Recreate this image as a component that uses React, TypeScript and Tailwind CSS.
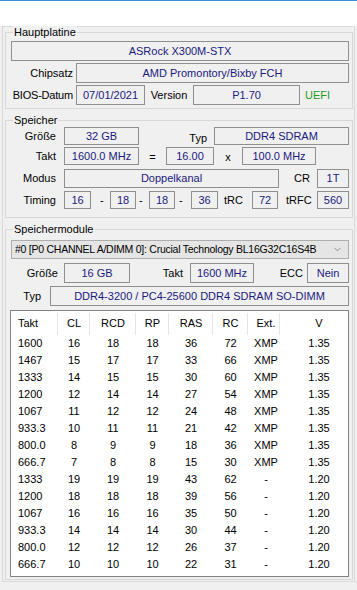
import React from "react";
import { ChevronDown } from "lucide-react";

const V = "text-[#1a1a80]";

function Field({ w, children, className = "" }: { w?: string; children: React.ReactNode; className?: string }) {
  return (
    <div className={`h-full border border-[#8f8f8f] flex items-center justify-center whitespace-nowrap ${V} ${w ?? "flex-1"} ${className}`}>
      {children}
    </div>
  );
}

function Group({ title, children, className = "" }: { title: string; children: React.ReactNode; className?: string }) {
  return (
    <div className={`relative border border-[#d8d8d8] pl-[5px] pr-[3px] ${className}`}>
      <div className="absolute left-[7px] top-[-7px] px-[1px] bg-[#f0f0f0] leading-[13px] text-black">{title}</div>
      {children}
    </div>
  );
}

const rows: string[][] = [
  ["1600", "16", "18", "18", "36", "72", "XMP", "1.35"],
  ["1467", "15", "17", "17", "33", "66", "XMP", "1.35"],
  ["1333", "14", "15", "15", "30", "60", "XMP", "1.35"],
  ["1200", "12", "14", "14", "27", "54", "XMP", "1.35"],
  ["1067", "11", "12", "12", "24", "48", "XMP", "1.35"],
  ["933.3", "10", "11", "11", "21", "42", "XMP", "1.35"],
  ["800.0", "8", "9", "9", "18", "36", "XMP", "1.35"],
  ["666.7", "7", "8", "8", "15", "30", "XMP", "1.35"],
  ["1333", "19", "19", "19", "43", "62", "-", "1.20"],
  ["1200", "18", "18", "18", "39", "56", "-", "1.20"],
  ["1067", "16", "16", "16", "35", "50", "-", "1.20"],
  ["933.3", "14", "14", "14", "30", "44", "-", "1.20"],
  ["800.0", "12", "12", "12", "26", "37", "-", "1.20"],
  ["666.7", "10", "10", "10", "22", "31", "-", "1.20"],
];

const headers = ["Takt", "CL", "RCD", "RP", "RAS", "RC", "Ext.", "V"];
const colW = ["w-[47px]", "w-[32px]", "w-[46px]", "w-[33px]", "w-[44px]", "w-[35px]", "w-[32px]", "w-[78px]"];
const colAlign = [
  "justify-start pl-[7px]",
  "justify-center",
  "justify-center",
  "justify-center",
  "justify-center",
  "justify-center",
  "justify-center pl-[4px]",
  "justify-center",
];

export default function App() {
  return (
    <div className="w-[357px] h-[590px] bg-[#f0f0f0] overflow-hidden font-['Liberation_Sans',Arial,sans-serif] text-[11px] text-black leading-none">
      <div className="h-px bg-[#3d8fd8]" />
      <div className="h-[25px] bg-white" />
      <div className="ml-[2px] w-[353px] h-[556px] border border-[#d9d9d9] pl-[2px] pr-px pt-[5px]">
        {/* Hauptplatine */}
        <Group title="Hauptplatine" className="pt-[8px] pb-[3px]">
          <div className="flex flex-col gap-[2px]">
            <div className="h-[20px] flex">
              <Field>ASRock X300M-STX</Field>
            </div>
            <div className="h-[20px] flex items-center">
              <div className="w-[65px] flex justify-end pr-[3px] whitespace-nowrap">Chipsatz</div>
              <Field>AMD Promontory/Bixby FCH</Field>
            </div>
            <div className="h-[20px] flex items-center">
              <div className="w-[65px] flex justify-end pr-[3px] whitespace-nowrap tracking-[-0.2px]">BIOS-Datum</div>
              <Field w="w-[69px]">07/01/2021</Field>
              <div className="w-[48px] text-center">Version</div>
              <Field w="w-[107px]">P1.70</Field>
              <div className="ml-[5px] text-[#1e9a1e]">UEFI</div>
            </div>
          </div>
        </Group>

        {/* Speicher */}
        <Group title="Speicher" className="mt-[11px] pt-[6px] pb-[8px]">
          <div className="h-[18px] flex items-center">
            <div className="w-[53px] text-right pr-[8px]">Größe</div>
            <Field w="w-[75px]">32 GB</Field>
            <div className="w-[75px] h-full flex items-center justify-end pr-[7px] pt-[5px]">Typ</div>
            <Field>DDR4 SDRAM</Field>
          </div>
          <div className="h-[18px] mt-[2px] flex items-center">
            <div className="w-[53px] text-right pr-[8px]">Takt</div>
            <Field w="w-[75px]">1600.0 MHz</Field>
            <div className="w-[27px] text-center pt-[3px]">=</div>
            <Field w="w-[48px]">16.00</Field>
            <div className="w-[28px] text-center pt-[3px]">x</div>
            <Field w="w-[74px]">100.0 MHz</Field>
          </div>
          <div className="h-[19px] mt-[4px] flex items-center">
            <div className="w-[53px] text-right pr-[8px]">Modus</div>
            <Field w="w-[215px]">Doppelkanal</Field>
            <div className="w-[38px] text-center pl-[8px]">CR</div>
            <Field>1T</Field>
          </div>
          <div className="h-[18px] mt-[3px] flex items-center">
            <div className="w-[53px] text-right pr-[8px]">Timing</div>
            <Field w="w-[27px]">16</Field>
            <div className="w-[19px] pl-[9px]">-</div>
            <Field w="w-[26px]">18</Field>
            <div className="w-[13px] pl-[3px]">-</div>
            <Field w="w-[26px]">18</Field>
            <div className="w-[16px] pl-[4px]">-</div>
            <Field w="w-[27px]">36</Field>
            <div className="w-[34px] pl-[6px]">tRC</div>
            <Field w="w-[26px]">72</Field>
            <div className="w-[39px] pl-[8px]">tRFC</div>
            <Field>560</Field>
          </div>
        </Group>

        {/* Speichermodule */}
        <Group title="Speichermodule" className="mt-[11px] pt-[10px] pb-[2px]">
          <div className="h-[19px] border border-[#adadad] bg-[#e5e5e5] flex items-center pl-[3px] pr-[5px]">
            <span className="flex-1 min-w-0 overflow-hidden whitespace-nowrap text-[10.5px] tracking-[-0.25px]">
              #0 [P0 CHANNEL A/DIMM 0]: Crucial Technology BL16G32C16S4B
            </span>
            <ChevronDown size={11} strokeWidth={1.2} color="#444" className="shrink-0" />
          </div>
          <div className="h-[20px] mt-[4px] flex items-center">
            <div className="w-[53px] text-right pr-[6px]">Größe</div>
            <Field w="w-[66px]">16 GB</Field>
            <div className="w-[60px] text-right pr-[7px]">Takt</div>
            <Field w="w-[64px]">1600 MHz</Field>
            <div className="w-[53px] text-right pr-[4px]">ECC</div>
            <Field>Nein</Field>
          </div>
          <div className="h-[20px] mt-[3px] flex items-center">
            <div className="w-[39px] text-right pr-[9px]">Typ</div>
            <Field>DDR4-3200 / PC4-25600 DDR4 SDRAM SO-DIMM</Field>
          </div>
          <div className="-ml-px mt-[4px] w-[339px] h-[267px] border border-[#828282] bg-white overflow-hidden">
            <div className="flex h-[24px] w-[400px]">
              {headers.map((h, i) => (
                <div key={h} className={`${colW[i]} h-full flex items-center ${colAlign[i]} relative`}>
                  {h}
                  {i < 7 && <div className="absolute right-0 top-[2px] bottom-0 w-px bg-[#e5e5e5]" />}
                </div>
              ))}
            </div>
            {rows.map((r, ri) => (
              <div key={ri} className="flex h-[17px] w-[400px]">
                {r.map((c, i) => (
                  <div key={i} className={`${colW[i]} h-full flex items-center ${colAlign[i]}`}>
                    {c}
                  </div>
                ))}
              </div>
            ))}
          </div>
        </Group>
      </div>
    </div>
  );
}
